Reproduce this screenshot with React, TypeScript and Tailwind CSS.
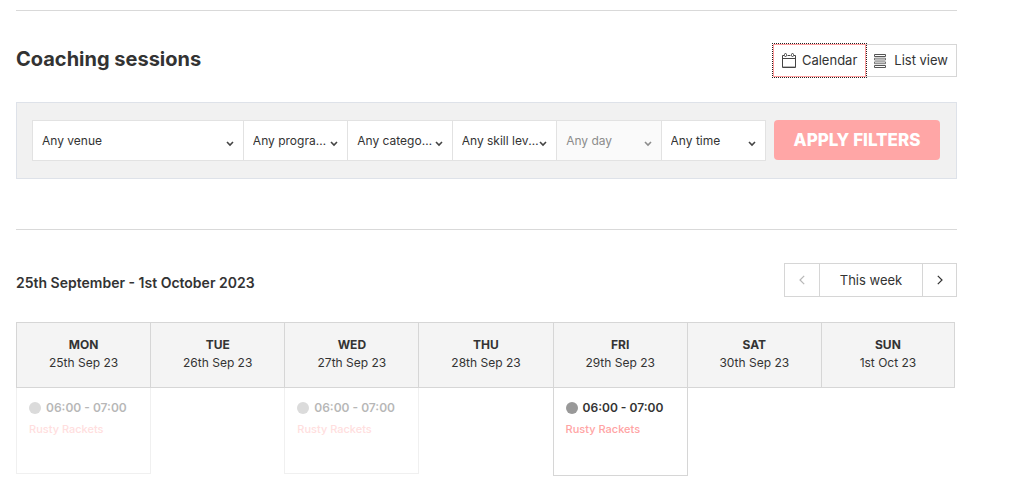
import { useState } from "react";
import clsx from "clsx";

const FILTERS = [
  { id: "venue", label: "Any venue" },
  { id: "programme", label: "Any programme" },
  { id: "category", label: "Any categories" },
  { id: "skill", label: "Any skill levels" },
  { id: "day", label: "Any day", disabled: true },
  { id: "time", label: "Any time" },
];

type Session = { time: string; name: string; past?: boolean };

const DAYS: { day: string; date: string; session?: Session }[] = [
  { day: "MON", date: "25th Sep 23", session: { time: "06:00 - 07:00", name: "Rusty Rackets", past: true } },
  { day: "TUE", date: "26th Sep 23" },
  { day: "WED", date: "27th Sep 23", session: { time: "06:00 - 07:00", name: "Rusty Rackets", past: true } },
  { day: "THU", date: "28th Sep 23" },
  { day: "FRI", date: "29th Sep 23", session: { time: "06:00 - 07:00", name: "Rusty Rackets" } },
  { day: "SAT", date: "30th Sep 23" },
  { day: "SUN", date: "1st Oct 23" },
];

function CalendarIcon() {
  return (
    <svg width="14" height="16" viewBox="0 0 14 16" fill="none" stroke="#444" aria-hidden="true">
      <path d="M2 2.5H.5v12h13v-12H12M5.5 2.5h3M.5 5.5h13" />
      <path d="M1 13.5h12" stroke="#bbb" />
      <rect x="2.5" y=".5" width="2" height="3" rx="1" />
      <rect x="9.5" y=".5" width="2" height="3" rx="1" />
    </svg>
  );
}

function ListIcon() {
  return (
    <svg width="12" height="14" viewBox="0 0 12 14" fill="none" stroke="#555" aria-hidden="true">
      <path d="M.5 .5h11v2H.5zM.5 11.5h11v2H.5z" />
      <path d="M.5 4.2h11v1.8H.5zM.5 7.9h11v1.8H.5z" strokeWidth=".8" />
    </svg>
  );
}

function Chevron({ className }: { className?: string }) {
  return (
    <svg width="8" height="6" viewBox="0 0 8 6" fill="none" stroke="#444" strokeWidth="1.6" className={className} aria-hidden="true">
      <path d="M1 1l3 3 3-3" />
    </svg>
  );
}

function Arrow({ className }: { className?: string }) {
  return (
    <svg width="6" height="10" viewBox="0 0 6 10" fill="none" stroke="#333" strokeWidth="1.2" className={className} aria-hidden="true">
      <path d="M.8 .8L5 5 .8 9.2" />
    </svg>
  );
}

function FilterSelect({ id, label, disabled }: { id: string; label: string; disabled?: boolean }) {
  return (
    <div className={clsx("relative border-l border-[#e2e2e2]", disabled ? "bg-[#fafafa]" : "bg-white")}>
      <select
        id={id}
        aria-label={label}
        disabled={disabled}
        className={clsx(
          "h-[39px] w-full appearance-none truncate pl-[9px] pr-4 text-xs",
          disabled && "text-[#8c8c8c]"
        )}
      >
        <option>{label}</option>
      </select>
      <Chevron className={clsx("pointer-events-none absolute right-[9px] top-5", disabled && "opacity-60")} />
    </div>
  );
}

function SessionCard({ session }: { session: Session }) {
  return (
    <div
      className={clsx(
        "-mr-px border border-t-0 border-[#d6d6d6] px-3 pt-3",
        session.past ? "h-[86px] opacity-35" : "h-[88px]"
      )}
    >
      <p className="flex items-center gap-[5px] text-xs font-semibold leading-4 whitespace-nowrap">
        <span className="size-3 rounded-full bg-[#999]" />
        {session.time}
      </p>
      <a href="#session" className="mt-1 block text-[11px] font-medium leading-[18px] text-[#ffa4a4]">
        {session.name}
      </a>
    </div>
  );
}

export default function App() {
  const [view, setView] = useState("calendar");

  return (
    <main className="bg-white pl-4 pr-[61px] pt-2.5 font-['Inter',sans-serif] text-[13px] text-[#333]">
      <hr className="border-[#d9d9d9]" />

      <header className="mt-[33px] flex items-center justify-between">
        <h1 className="pb-1 text-xl font-bold">Coaching sessions</h1>
        <div className="flex h-[33px]">
          <button
            onClick={() => setView("calendar")}
            className={clsx(
              "flex items-center gap-1.5 border px-2",
              view === "calendar"
                ? "border-[#ff9c9c] outline-1 outline-dotted outline-[#222]"
                : "border-[#d6d6d6]"
            )}
          >
            <CalendarIcon />
            Calendar
          </button>
          <button
            onClick={() => setView("list")}
            className="flex items-center gap-2 border border-l-0 border-[#d6d6d6] px-2"
          >
            <ListIcon />
            List view
          </button>
        </div>
      </header>

      <form
        onSubmit={(e) => e.preventDefault()}
        className="mt-[25px] flex gap-2 border border-[#dee2e9] bg-[#f1f1f1] py-[17px] pl-[15px] pr-4"
      >
        <div className="grid flex-1 grid-cols-[210fr_repeat(5,104fr)] border border-l-0 border-[#e2e2e2]">
          {FILTERS.map((filter) => (
            <FilterSelect key={filter.id} {...filter} />
          ))}
        </div>
        <button className="h-10 w-[166px] rounded bg-[#ffa6a6] pt-0.5 text-[17px] font-extrabold text-white">
          APPLY FILTERS
        </button>
      </form>

      <hr className="mt-[50px] border-[#d9d9d9]" />

      <section className="mt-[33px] flex items-center justify-between">
        <h2 className="pt-1 text-[14px] font-semibold">25th September - 1st October 2023</h2>
        <div className="flex h-[34px] border border-[#d6d6d6]">
          <button aria-label="Previous week" disabled className="flex w-[34px] items-center justify-center">
            <Arrow className="rotate-180 opacity-35" />
          </button>
          <button className="w-[104px] border-x border-[#d6d6d6] pt-0.5">This week</button>
          <button aria-label="Next week" className="flex w-[33px] items-center justify-center">
            <Arrow />
          </button>
        </div>
      </section>

      <div className="mt-[25px] pr-0.5">
        <table className="w-full table-fixed border-separate border-spacing-0">
          <thead>
            <tr>
              {DAYS.map(({ day, date }) => (
                <th
                  key={day}
                  scope="col"
                  className="h-[66px] border border-r-0 border-[#d6d6d6] bg-[#f4f4f4] p-0 pb-0.5 text-xs font-normal leading-[18px] last:border-r"
                >
                  <span className="block font-bold">{day}</span>
                  {date}
                </th>
              ))}
            </tr>
          </thead>
          <tbody>
            <tr>
              {DAYS.map(({ day, session }) => (
                <td key={day} className="p-0 align-top">
                  {session && <SessionCard session={session} />}
                </td>
              ))}
            </tr>
          </tbody>
        </table>
      </div>
    </main>
  );
}
